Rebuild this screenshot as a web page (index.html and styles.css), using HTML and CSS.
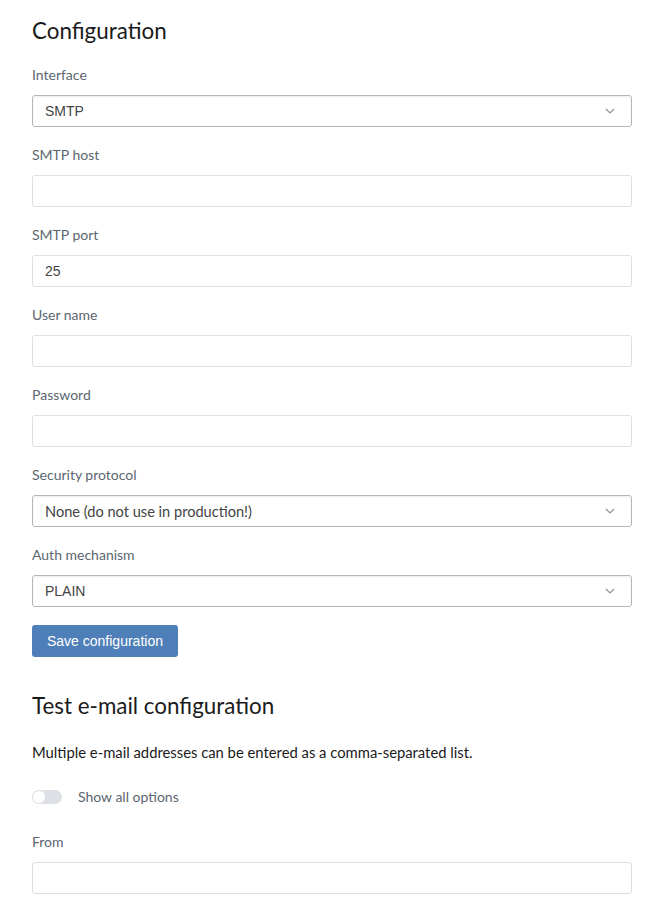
FILE: index.html
```html
<!DOCTYPE html>
<html lang="en">
  <head>
    <meta charset="UTF-8" />
    <meta name="viewport" content="width=device-width, initial-scale=1.0" />
    <title>Mail configuration</title>
    <link rel="stylesheet" href="styles.css">
  </head>
  <body>
    <div class="page">
      <h2>Configuration</h2>

      <form class="config-form">
        <div class="field">
          <label>Interface</label>
          <div class="select">
            <span>SMTP</span>
            <svg width="10" height="6" viewBox="0 0 10 6"><path d="M1 1l4 4 4-4" fill="none" stroke="#8a9099" stroke-width="1.1"/></svg>
          </div>
        </div>

        <div class="field">
          <label>SMTP host</label>
          <input type="text" />
        </div>

        <div class="field">
          <label>SMTP port</label>
          <input type="text" value="25" />
        </div>

        <div class="field">
          <label>User name</label>
          <input type="text" />
        </div>

        <div class="field">
          <label>Password</label>
          <input type="password" />
        </div>

        <div class="field">
          <label>Security protocol</label>
          <div class="select">
            <span class="alt">None (do not use in production!)</span>
            <svg width="10" height="6" viewBox="0 0 10 6"><path d="M1 1l4 4 4-4" fill="none" stroke="#8a9099" stroke-width="1.1"/></svg>
          </div>
        </div>

        <div class="field">
          <label>Auth mechanism</label>
          <div class="select">
            <span>PLAIN</span>
            <svg width="10" height="6" viewBox="0 0 10 6"><path d="M1 1l4 4 4-4" fill="none" stroke="#8a9099" stroke-width="1.1"/></svg>
          </div>
        </div>

        <button type="button" class="save-btn">Save configuration</button>
      </form>

      <h2 class="test-title">Test e-mail configuration</h2>
      <p class="hint">Multiple e-mail addresses can be entered as a comma-separated list.</p>

      <div class="toggle-row">
        <span class="toggle"><span class="knob"></span></span>
        <span class="toggle-label">Show all options</span>
      </div>

      <div class="field">
        <label>From</label>
        <input type="text" />
      </div>
    </div>
  </body>
</html>
```

FILE: styles.css
```css
body {
  margin: 0;
  font-family: "Lato", "Liberation Sans", sans-serif;
  color: #1a1a1a;
  background: #fff;
}
.page {
  padding: 15px 31px 0 32px;
}
h2 {
  margin: 0;
  font-size: 22.4px;
  font-weight: 400;
  line-height: 32px;
  color: #1b1b1b;
}
.config-form {
  margin-top: 19px;
}
.field {
  margin-bottom: 19px;
}
.field label {
  display: block;
  font-size: 14px;
  line-height: 18px;
  color: #5b6670;
  margin-bottom: 11px;
}
.field input {
  display: block;
  box-sizing: border-box;
  width: 100%;
  height: 32px;
  margin: 0;
  padding: 0 12px;
  border: 1px solid #dcdfe4;
  border-radius: 3px;
  font-family: "Liberation Sans", Arial, sans-serif;
  font-size: 14px;
  color: #444;
  outline: none;
}
.select {
  box-sizing: border-box;
  height: 32px;
  display: flex;
  align-items: center;
  justify-content: space-between;
  padding: 0 16px 0 12px;
  border: 1px solid #b4b8be;
  border-radius: 3px;
  box-shadow: inset 0 1px 2px rgba(0, 0, 0, 0.08);
  font-family: "Liberation Sans", Arial, sans-serif;
  font-size: 14px;
  color: #444;
}
.select .alt {
  font-family: "Lato", sans-serif;
  font-size: 14.6px;
}
.save-btn {
  display: block;
  height: 32px;
  margin-top: -1px;
  padding: 0 15px;
  border: none;
  border-radius: 3px;
  background-color: #4f7fb8;
  color: #fff;
  font-family: "Liberation Sans", Arial, sans-serif;
  font-size: 14px;
}
.test-title {
  margin-top: 33px;
}
.hint {
  margin: 20px 0 0;
  font-size: 14.8px;
  line-height: 20px;
}
.toggle-row {
  display: flex;
  align-items: center;
  gap: 16px;
  margin-top: 26px;
  margin-bottom: 28px;
}
.toggle {
  position: relative;
  width: 30px;
  height: 14px;
  border-radius: 7px;
  background: #dde0e5;
}
.knob {
  position: absolute;
  left: 1px;
  top: 1px;
  width: 12px;
  height: 12px;
  border-radius: 50%;
  background: #fff;
}
.toggle-label {
  font-size: 14px;
  color: #5b6670;
}
```
